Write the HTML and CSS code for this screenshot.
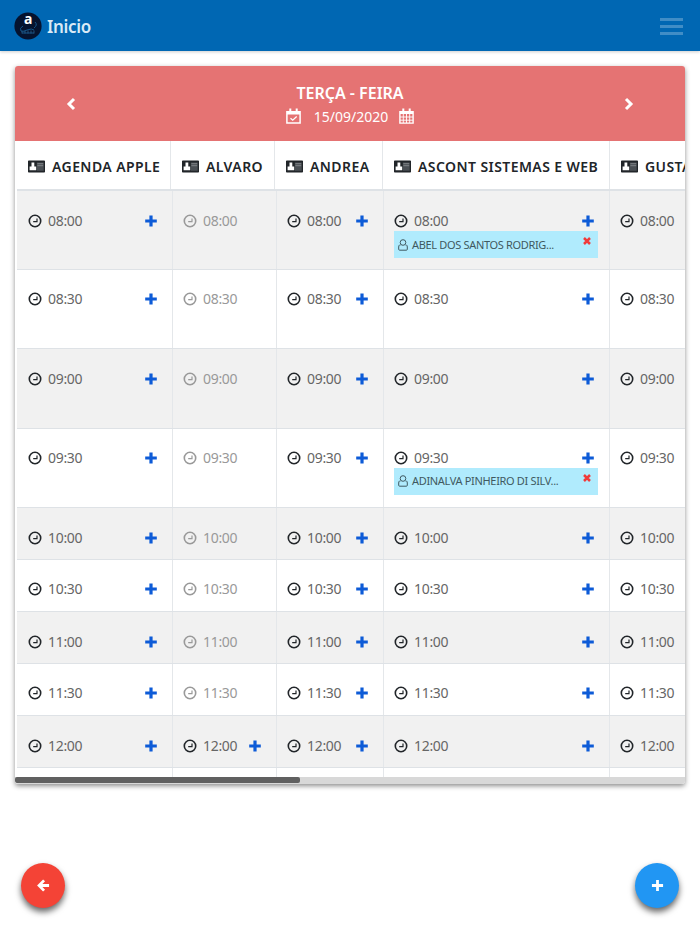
FILE: index.html
```
<!DOCTYPE html>
<html lang="pt-BR">
<head>
    <meta charset="UTF-8">
    <meta name="viewport" content="width=device-width, initial-scale=1.0">
    <title>Agenda</title>
    <link rel="stylesheet" href="styles.css">
</head>
<body>
    <!-- Icons -->
    <svg class="sprite">
        <symbol id="clock" viewBox="0 0 14 14">
            <circle cx="7" cy="7" r="5.7" fill="none" stroke="currentColor" stroke-width="1.6"/>
            <path d="M9 4.600V7.600H5.200" fill="none" stroke="currentColor" stroke-width="1.2"/>
        </symbol>
        <symbol id="plus" viewBox="0 0 12 12">
            <path d="M4.4 .6h3.2v3.8h4.2v3.1H7.6v3.9H4.4V7.5H.2V4.4h4.2z" fill="currentColor"/>
        </symbol>
        <symbol id="card" viewBox="0 0 17 13">
            <path d="M.8 .5h15.400a.8.8 0 0 1 .8.8v10.400a.8.8 0 0 1-.8.8H.8a.8.8 0 0 1-.8-.8V1.300A.8.8 0 0 1 .8.5z" fill="currentColor"/>
            <path d="M8.800 2.600h6.900v8.200H8.800z" fill="#4a4f54"/>
            <path d="M3.500 2.600h2.800v4h1.900v3.600H1.600V6.600h1.900z" fill="#fff"/>
            <path d="M9.400 3.700h5.800M9.400 5.700h5.800" stroke="#85898c" stroke-width=".9"/>
        </symbol>
        <symbol id="user" viewBox="0 0 10 12">
            <circle cx="5" cy="3.5" r="2.8" fill="none" stroke="currentColor"/>
            <path d="M2.500 6H1.600Q.7 6.400.7 8v2.300q0 .9.900.9h6.800q.9 0 .9-.9V8q0-1.600-.9-2H7.500" fill="none" stroke="currentColor"/>
        </symbol>
        <symbol id="times" viewBox="0 0 8 8">
            <path d="M1 1l6 6M7 1L1 7" stroke="currentColor" stroke-width="2.5"/>
        </symbol>
    </svg>

    <!-- Top bar -->
    <nav class="navbar">
        <a class="brand">
            <svg class="logo" viewBox="0 0 28 28">
                <circle cx="14" cy="14" r="13.6" fill="#05132f"/>
                <path d="M9 14q-4 2-2 5 3 1 6-1 5-2 7 0M21 10q3 3-1 6M8 21h12" fill="none" stroke="#14558a" stroke-width="1"/>
                <path d="M8 19v2.500m3-3v3m3-3v3m3-3v3m3-3v3" stroke="#28618c" stroke-width=".8"/>
                <text x="14" y="12.300" class="logo-letter">a</text>
            </svg>
            <span>Inicio</span>
        </a>
        <button class="menu-btn"><span></span><span></span><span></span></button>
    </nav>

    <!-- Schedule -->
    <main class="agenda">
        <header class="day">
            <svg class="arrow" viewBox="0 0 10 14"><path d="M8 2L3 7l5 5" /></svg>
            <div class="day-info">
                <h1>TERÇA - FEIRA</h1>
                <div class="date">
                    <svg viewBox="0 0 15 17">
                        <path d="M.9 3.800h13.200v11.300H.9z" fill="none" stroke="#fff" stroke-width="1.500"/>
                        <path d="M1 3h13v3.500H1zM3.300.5h2V4h-2zM9.700.5h2V4h-2z" fill="#fff"/>
                        <path d="M4.500 10.200l2.200 2L10.700 8.500" fill="none" stroke="#fff" stroke-width="1.300"/>
                    </svg>
                    <span>15/09/2020</span>
                    <svg viewBox="0 0 15 17">
                        <path d="M.9 3.800h13.200v11.300H.9z" fill="none" stroke="#fff" stroke-width="1.400"/>
                        <path d="M1 3h13v3H1zM3.300.5h2V4h-2zM9.700.5h2V4h-2z" fill="#fff"/>
                        <path d="M1 9h13M1 12.200h13M4.300 6v9M7.500 6v9M10.700 6v9" stroke="#fff" stroke-width=".9"/>
                    </svg>
                </div>
            </div>
            <svg class="arrow" viewBox="0 0 10 14"><path d="M2 2l5 5-5 5" /></svg>
        </header>

        <div class="schedule">
            <div class="row head">
                <div class="cell"><svg><use href="#card"/></svg>AGENDA APPLE</div>
                <div class="cell"><svg><use href="#card"/></svg>ALVARO</div>
                <div class="cell"><svg><use href="#card"/></svg>ANDREA</div>
                <div class="cell"><svg><use href="#card"/></svg>ASCONT SISTEMAS E WEB</div>
                <div class="cell"><svg><use href="#card"/></svg>GUSTAVO</div>
            </div>

            <div class="row tall first">
                <div class="cell"><div class="slot"><svg><use href="#clock"/></svg><time>08:00</time><svg class="add"><use href="#plus"/></svg></div></div>
                <div class="cell off"><div class="slot"><svg><use href="#clock"/></svg><time>08:00</time></div></div>
                <div class="cell"><div class="slot"><svg><use href="#clock"/></svg><time>08:00</time><svg class="add"><use href="#plus"/></svg></div></div>
                <div class="cell">
                    <div class="slot"><svg><use href="#clock"/></svg><time>08:00</time><svg class="add"><use href="#plus"/></svg></div>
                    <div class="booking"><svg class="user"><use href="#user"/></svg><span>ABEL DOS SANTOS RODRIG...</span><svg class="remove"><use href="#times"/></svg></div>
                </div>
                <div class="cell"><div class="slot"><svg><use href="#clock"/></svg><time>08:00</time></div></div>
            </div>

            <div class="row tall">
                <div class="cell"><div class="slot"><svg><use href="#clock"/></svg><time>08:30</time><svg class="add"><use href="#plus"/></svg></div></div>
                <div class="cell off"><div class="slot"><svg><use href="#clock"/></svg><time>08:30</time></div></div>
                <div class="cell"><div class="slot"><svg><use href="#clock"/></svg><time>08:30</time><svg class="add"><use href="#plus"/></svg></div></div>
                <div class="cell"><div class="slot"><svg><use href="#clock"/></svg><time>08:30</time><svg class="add"><use href="#plus"/></svg></div></div>
                <div class="cell"><div class="slot"><svg><use href="#clock"/></svg><time>08:30</time></div></div>
            </div>

            <div class="row tall">
                <div class="cell"><div class="slot"><svg><use href="#clock"/></svg><time>09:00</time><svg class="add"><use href="#plus"/></svg></div></div>
                <div class="cell off"><div class="slot"><svg><use href="#clock"/></svg><time>09:00</time></div></div>
                <div class="cell"><div class="slot"><svg><use href="#clock"/></svg><time>09:00</time><svg class="add"><use href="#plus"/></svg></div></div>
                <div class="cell"><div class="slot"><svg><use href="#clock"/></svg><time>09:00</time><svg class="add"><use href="#plus"/></svg></div></div>
                <div class="cell"><div class="slot"><svg><use href="#clock"/></svg><time>09:00</time></div></div>
            </div>

            <div class="row tall">
                <div class="cell"><div class="slot"><svg><use href="#clock"/></svg><time>09:30</time><svg class="add"><use href="#plus"/></svg></div></div>
                <div class="cell off"><div class="slot"><svg><use href="#clock"/></svg><time>09:30</time></div></div>
                <div class="cell"><div class="slot"><svg><use href="#clock"/></svg><time>09:30</time><svg class="add"><use href="#plus"/></svg></div></div>
                <div class="cell">
                    <div class="slot"><svg><use href="#clock"/></svg><time>09:30</time><svg class="add"><use href="#plus"/></svg></div>
                    <div class="booking"><svg class="user"><use href="#user"/></svg><span>ADINALVA PINHEIRO DI SILV...</span><svg class="remove"><use href="#times"/></svg></div>
                </div>
                <div class="cell"><div class="slot"><svg><use href="#clock"/></svg><time>09:30</time></div></div>
            </div>

            <div class="row">
                <div class="cell"><div class="slot"><svg><use href="#clock"/></svg><time>10:00</time><svg class="add"><use href="#plus"/></svg></div></div>
                <div class="cell off"><div class="slot"><svg><use href="#clock"/></svg><time>10:00</time></div></div>
                <div class="cell"><div class="slot"><svg><use href="#clock"/></svg><time>10:00</time><svg class="add"><use href="#plus"/></svg></div></div>
                <div class="cell"><div class="slot"><svg><use href="#clock"/></svg><time>10:00</time><svg class="add"><use href="#plus"/></svg></div></div>
                <div class="cell"><div class="slot"><svg><use href="#clock"/></svg><time>10:00</time></div></div>
            </div>

            <div class="row">
                <div class="cell"><div class="slot"><svg><use href="#clock"/></svg><time>10:30</time><svg class="add"><use href="#plus"/></svg></div></div>
                <div class="cell off"><div class="slot"><svg><use href="#clock"/></svg><time>10:30</time></div></div>
                <div class="cell"><div class="slot"><svg><use href="#clock"/></svg><time>10:30</time><svg class="add"><use href="#plus"/></svg></div></div>
                <div class="cell"><div class="slot"><svg><use href="#clock"/></svg><time>10:30</time><svg class="add"><use href="#plus"/></svg></div></div>
                <div class="cell"><div class="slot"><svg><use href="#clock"/></svg><time>10:30</time></div></div>
            </div>

            <div class="row">
                <div class="cell"><div class="slot"><svg><use href="#clock"/></svg><time>11:00</time><svg class="add"><use href="#plus"/></svg></div></div>
                <div class="cell off"><div class="slot"><svg><use href="#clock"/></svg><time>11:00</time></div></div>
                <div class="cell"><div class="slot"><svg><use href="#clock"/></svg><time>11:00</time><svg class="add"><use href="#plus"/></svg></div></div>
                <div class="cell"><div class="slot"><svg><use href="#clock"/></svg><time>11:00</time><svg class="add"><use href="#plus"/></svg></div></div>
                <div class="cell"><div class="slot"><svg><use href="#clock"/></svg><time>11:00</time></div></div>
            </div>

            <div class="row">
                <div class="cell"><div class="slot"><svg><use href="#clock"/></svg><time>11:30</time><svg class="add"><use href="#plus"/></svg></div></div>
                <div class="cell off"><div class="slot"><svg><use href="#clock"/></svg><time>11:30</time></div></div>
                <div class="cell"><div class="slot"><svg><use href="#clock"/></svg><time>11:30</time><svg class="add"><use href="#plus"/></svg></div></div>
                <div class="cell"><div class="slot"><svg><use href="#clock"/></svg><time>11:30</time><svg class="add"><use href="#plus"/></svg></div></div>
                <div class="cell"><div class="slot"><svg><use href="#clock"/></svg><time>11:30</time></div></div>
            </div>

            <div class="row">
                <div class="cell"><div class="slot"><svg><use href="#clock"/></svg><time>12:00</time><svg class="add"><use href="#plus"/></svg></div></div>
                <div class="cell"><div class="slot"><svg><use href="#clock"/></svg><time>12:00</time><svg class="add"><use href="#plus"/></svg></div></div>
                <div class="cell"><div class="slot"><svg><use href="#clock"/></svg><time>12:00</time><svg class="add"><use href="#plus"/></svg></div></div>
                <div class="cell"><div class="slot"><svg><use href="#clock"/></svg><time>12:00</time><svg class="add"><use href="#plus"/></svg></div></div>
                <div class="cell"><div class="slot"><svg><use href="#clock"/></svg><time>12:00</time></div></div>
            </div>

            <div class="row last">
                <div class="cell"></div>
                <div class="cell"></div>
                <div class="cell"></div>
                <div class="cell"></div>
                <div class="cell"></div>
            </div>
        </div>
        <div class="scrollbar"><div class="thumb"></div></div>
    </main>

    <!-- Floating actions -->
    <footer class="actions">
        <button class="fab back"><svg viewBox="0 0 14 14"><path d="M7.600 1.500L2.200 7l5.400 5.500M2.500 7H13" fill="none" stroke="#fff" stroke-width="3"/></svg></button>
        <button class="fab new"><svg viewBox="0 0 14 14"><path d="M7 1v12M1 7h12" stroke="#fff" stroke-width="3"/></svg></button>
    </footer>
</body>
</html>
```

FILE: styles.css
```
* {
    box-sizing: border-box;
}

body {
    margin: 0;
    height: 934px;
    overflow: hidden;
    background-color: #fff;
    color: #212529;
    font-family: "Noto Sans", "Open Sans", sans-serif;
}

svg {
    display: block;
    flex: none;
}

button {
    border: none;
    padding: 0;
    cursor: pointer;
}

.sprite {
    display: none;
}

/* Top bar */
.navbar {
    display: flex;
    justify-content: space-between;
    align-items: center;
    height: 51px;
    padding: 1px 17px 0 14px;
    background-color: #0067b3;
    box-shadow: 0 1px 3px rgba(0, 0, 0, 0.2);
}

.brand {
    display: flex;
    align-items: center;
    gap: 5px;
    color: #d9eaf6;
    font-size: 17px;
    font-weight: 600;
    letter-spacing: -0.3px;
}

.brand span {
    padding-top: 1px;
}

.logo {
    width: 28px;
    height: 28px;
}

.logo-letter {
    fill: #fff;
    font-size: 14px;
    font-weight: bold;
    text-anchor: middle;
}

.menu-btn {
    display: flex;
    flex-direction: column;
    gap: 4px;
    background: none;
}

.menu-btn span {
    width: 23px;
    height: 3px;
    background-color: #408dc6;
}

/* Schedule */
.agenda {
    margin: 15px 15px 0;
    height: 718px;
    border-radius: 3px;
    overflow: hidden;
    background-color: #fff;
    box-shadow: 0 2px 5px rgba(0, 0, 0, 0.45);
}

.day {
    display: flex;
    justify-content: space-between;
    align-items: center;
    height: 75px;
    padding: 0 51px;
    background-color: #e57373;
    color: #fff;
}

.arrow {
    width: 10px;
    height: 14px;
}

.arrow path {
    fill: none;
    stroke: #fff;
    stroke-width: 3;
}

.day-info {
    text-align: center;
}

.day h1 {
    margin: 2px 0 0;
    font-size: 16px;
    font-weight: 600;
    line-height: 24px;
    letter-spacing: 0;
}

.date {
    display: flex;
    justify-content: center;
    align-items: center;
    gap: 12px;
    font-size: 14px;
    line-height: 23px;
}

.date span {
    margin: 0 -1px 0 1px;
}

.date svg {
    width: 15px;
    height: 17px;
}

.schedule {
    height: 636px;
    overflow: hidden;
    padding-left: 2px;
}

.row {
    display: grid;
    grid-template-columns: 156px 104px 107px 226px 120px;
    height: 52px;
    border-bottom: 1px solid #dee2e6;
}

.row:nth-child(even) {
    background-color: #f1f1f1;
}

.cell {
    min-width: 0;
    padding: 19px 11px 0 10px;
    border-right: 1px solid #e4e7ea;
}

.cell:first-child {
    padding-left: 11px;
}

.row:nth-child(even) .cell {
    padding-top: 20px;
}

.row.tall {
    height: 79.4px;
}

.row.first {
    height: 79px;
}

.row.head {
    grid-template-columns: 154px 104px 108px 227px 120px;
    height: 50px;
    border-bottom: 2px solid #dee2e6;
}

.head .cell {
    display: flex;
    align-items: center;
    gap: 7px;
    padding: 3px 0 0 11px;
    font-size: 14px;
    font-weight: 600;
    letter-spacing: 0.42px;
    white-space: nowrap;
}

.head svg {
    width: 17px;
    height: 13px;
}

.slot {
    display: flex;
    align-items: center;
    height: 20px;
    padding-right: 4px;
    color: #212529;
    font-size: 14px;
}

.slot svg {
    width: 14px;
    height: 14px;
}

.slot time {
    margin: -1px 0 0 6px;
    color: #666;
    letter-spacing: -0.3px;
}

.slot .add {
    width: 12px;
    height: 12px;
    margin-left: auto;
    color: #0d5bd7;
}

.off .slot,
.off .slot time {
    color: #999;
}

.booking {
    display: flex;
    align-items: center;
    height: 27px;
    padding: 0 7px 0 4px;
    background-color: #b0ebfd;
    color: #3f5960;
    font-size: 11px;
    letter-spacing: -0.33px;
    white-space: nowrap;
}

.booking span {
    margin-top: -1px;
}

.booking .user {
    width: 10px;
    height: 12px;
    margin-right: 4px;
}

.booking .remove {
    width: 8px;
    height: 8px;
    margin: 0 0 7px auto;
    color: #f03a3a;
}

.row.last {
    height: 10px;
    border-bottom: none;
}

.scrollbar {
    height: 7px;
    background-color: #d8d8d8;
}

.thumb {
    width: 285px;
    height: 6px;
    border-radius: 2px;
    background-color: #606060;
}

/* Floating actions */
.actions {
    display: flex;
    justify-content: space-between;
    margin-top: 79px;
    padding: 0 21px;
}

.fab {
    display: flex;
    align-items: center;
    justify-content: center;
    width: 44px;
    height: 45px;
    border-radius: 50%;
    box-shadow: 0 4px 6px rgba(0, 0, 0, 0.6);
}

.fab svg {
    width: 13px;
    height: 13px;
}

.back {
    background-color: #f44336;
}

.new {
    background-color: #2196f3;
}
```
